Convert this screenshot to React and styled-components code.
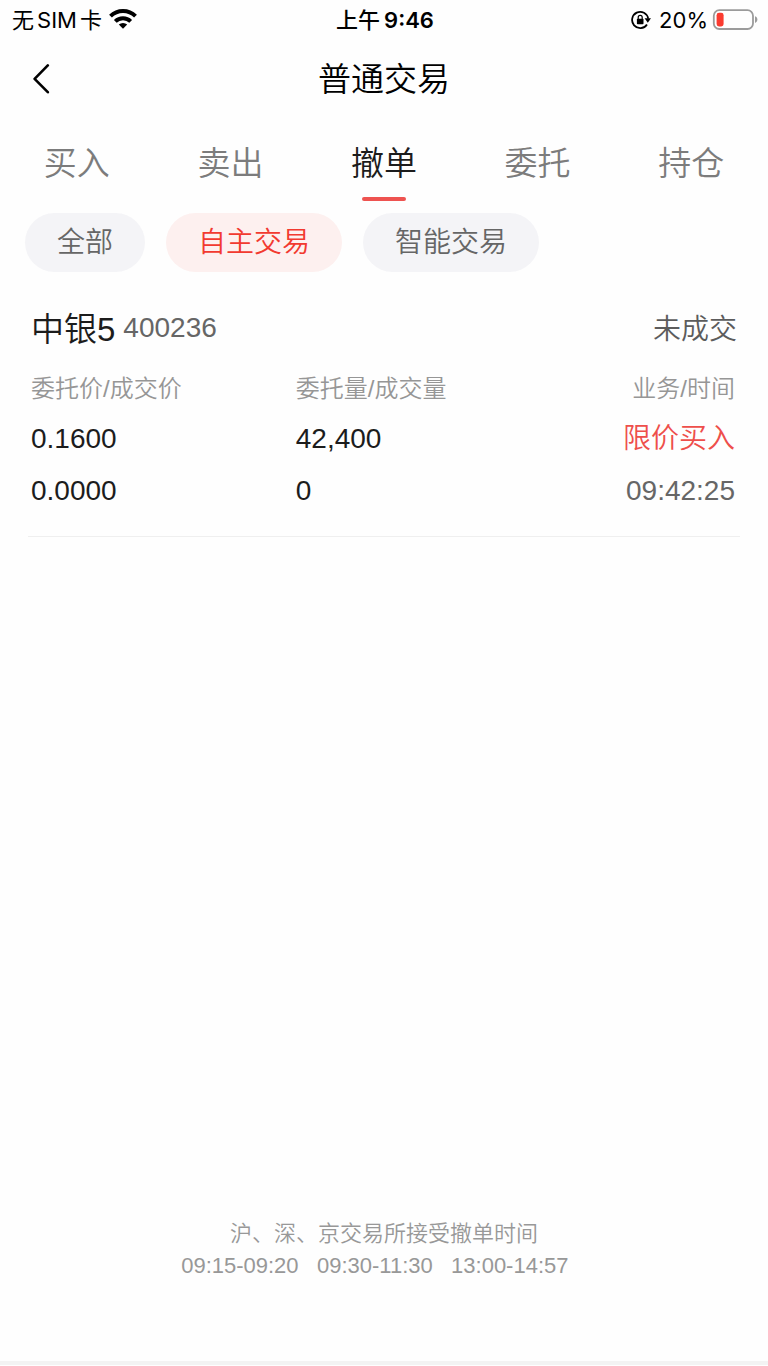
import React, { useState } from "react";
import styled, { createGlobalStyle } from "styled-components";

/* ---------------- GLOBAL ---------------- */
const GlobalStyle = createGlobalStyle`
  * {
    box-sizing: border-box;
  }

  body {
    margin: 0;
    background: #fefefe;
    color: #1c1c1c;
    font-family: "Liberation Sans", "Noto Sans CJK SC", sans-serif;
    font-weight: 350;
  }

  button {
    padding: 0;
    border: none;
    background: none;
    font: inherit;
    color: inherit;
    cursor: pointer;
  }
`;

const Page = styled.div`
  display: flex;
  flex-direction: column;
  min-height: 100vh;
`;

/* ---------------- STATUS BAR ---------------- */
const StatusBar = styled.div`
  display: grid;
  grid-template-columns: 1fr auto 1fr;
  align-items: center;
  height: 40px;
  padding: 0 10px 0 12px;
  font-family: Inter, "Noto Sans CJK SC", sans-serif;
  font-size: 22px;
  font-weight: 400;
  line-height: 24px;
  color: #000;
`;

const StatusGroup = styled.div`
  display: flex;
  align-items: center;
  justify-content: ${(p) => (p.$end ? "flex-end" : "flex-start")};
  gap: ${(p) => (p.$end ? 4 : 7)}px;

  svg {
    display: block;
    flex: none;
  }
`;

const Carrier = styled.span`
  display: flex;
  gap: 3px;
`;

const Clock = styled.span`
  display: flex;
  gap: 4px;
  font-weight: 600;

  span:first-child {
    font-weight: 500;
  }
`;

const Percent = styled.span`
  padding-left: 4px;
`;

/* ---------------- HEADER ---------------- */
const Header = styled.header`
  display: grid;
  grid-template-columns: 80px 1fr 80px;
  align-items: center;
  height: 78px;
  color: #000;
`;

const BackButton = styled.button`
  display: flex;
  align-items: center;
  height: 76px;
  padding-left: 32px;
`;

const Title = styled.h1`
  margin: 0;
  padding-top: 2px;
  font-size: 33px;
  font-weight: 350;
  line-height: 48px;
  text-align: center;
`;

/* ---------------- TABS ---------------- */
const Tabs = styled.nav`
  display: grid;
  grid-template-columns: repeat(5, 1fr);
  padding-top: 22px;
`;

const Tab = styled.button`
  display: flex;
  flex-direction: column;
  align-items: center;
  gap: 9px;
  font-size: 33px;
  line-height: 48px;
  color: ${(p) => (p.$active ? "#1c1c1c" : "#7c7c7c")};

  &::after {
    content: "";
    width: 44px;
    height: 4px;
    border-radius: 2px;
    background: ${(p) => (p.$active ? "#ee5350" : "transparent")};
  }
`;

/* ---------------- FILTERS ---------------- */
const Filters = styled.div`
  display: flex;
  gap: 21px;
  padding: 12px 25px 0;
`;

const Chip = styled.button`
  height: 59px;
  padding: 0 32px;
  border-radius: 30px;
  font-size: 28px;
  line-height: 40px;
  color: ${(p) => (p.$active ? "#f23a30" : "#666")};
  background: ${(p) => (p.$active ? "#fdf0ef" : "#f4f4f7")};
`;

/* ---------------- ORDER ---------------- */
const Order = styled.article`
  margin: 34px 28px 0;
  padding: 0 3px 19px;
  border-bottom: 1px solid #efefef;
`;

const OrderHead = styled.div`
  display: flex;
  align-items: center;
  gap: 8px;
  height: 48px;
`;

const StockName = styled.h2`
  margin: 0;
  font-size: 33px;
  font-weight: 350;
  line-height: 48px;
`;

const StockCode = styled.span`
  height: 48px;
  font-size: 28px;
  line-height: 44px;
  color: #666;
`;

const OrderStatus = styled.span`
  margin-left: auto;
  font-size: 28px;
  line-height: 48px;
  color: #5c5c5c;
`;

const Table = styled.table`
  width: 100%;
  margin-top: 11px;
  table-layout: fixed;
  border-collapse: collapse;
  text-align: left;
`;

const HeadCell = styled.th`
  width: ${(p) => p.$width};
  height: 48px;
  padding: ${(p) => (p.$end ? "0 2px 0 0" : "0")};
  font-size: 24px;
  font-weight: 350;
  line-height: 36px;
  text-align: ${(p) => (p.$end ? "right" : "left")};
  color: #969696;
`;

const Cell = styled.td`
  height: 52px;
  padding: ${(p) => (p.$end ? "0 2px 0 0" : "0")};
  font-size: 28px;
  line-height: 40px;
  text-align: ${(p) => (p.$end ? "right" : "left")};
  color: ${(p) => (p.$side ? "#ee4f4b" : p.$end ? "#666" : "#1c1c1c")};
`;

/* ---------------- FOOTER ---------------- */
const Footer = styled.footer`
  margin-top: auto;
  padding-bottom: 79px;
  font-size: 22px;
  line-height: 32px;
  text-align: center;
  color: #989898;

  p {
    margin: 0;
    white-space: pre;
  }
`;

const BottomLine = styled.div`
  height: 4px;
  margin-bottom: 1px;
  background: #f3f3f3;
`;

/* ---------------- ICONS ---------------- */
const WifiIcon = () => (
  <svg width="28" height="22" viewBox="0 0 28 22" aria-hidden="true">
    <g fill="none" stroke="#000" strokeWidth="4">
      <path d="M1.5 7.2a17.8 17.8 0 0 1 25 0" />
      <path d="M6.3 12.4a11 11 0 0 1 15.4 0" />
    </g>
    <path d="M14 19.8 9.8 15.6a6 6 0 0 1 8.4 0z" />
  </svg>
);

const RotationLockIcon = () => (
  <svg width="20" height="20" viewBox="0 0 20 20" aria-hidden="true">
    <path
      d="M16 14.4A8.1 8.1 0 1 1 17.2 8.6"
      fill="none"
      stroke="#000"
      strokeWidth="1.8"
    />
    <path d="M13.6 8.2H20l-3.2 4.6z" />
    <rect x="5.9" y="8.8" width="6.6" height="5.4" rx="0.8" />
    <path
      d="M7.2 9V7.4a2 2 0 0 1 4 0V9"
      fill="none"
      stroke="#000"
      strokeWidth="1.2"
    />
  </svg>
);

const BatteryIcon = () => (
  <svg width="46" height="22" viewBox="0 0 46 22" aria-hidden="true">
    <rect
      x="1.8"
      y="1.2"
      width="39.2"
      height="18.8"
      rx="5.5"
      fill="none"
      stroke="#9b9b9b"
      strokeWidth="1.8"
    />
    <rect x="4.6" y="3.8" width="7" height="13.6" rx="2.4" fill="#fa3b30" />
    <path d="M43 7.2c3.2 1 3.2 5.8 0 6.8z" fill="#9b9b9b" />
  </svg>
);

const BackIcon = () => (
  <svg width="18" height="30" viewBox="0 0 18 30" aria-hidden="true">
    <path
      d="M15.8 1.4 2.6 14.8l13.2 13.4"
      fill="none"
      stroke="#000"
      strokeWidth="2.6"
      strokeLinecap="round"
      strokeLinejoin="round"
    />
  </svg>
);

const tabs = ["买入", "卖出", "撤单", "委托", "持仓"];
const filters = ["全部", "自主交易", "智能交易"];

export default function App() {
  const [tab, setTab] = useState("撤单");
  const [filter, setFilter] = useState("自主交易");

  return (
    <Page lang="zh-CN">
      <GlobalStyle />

      <StatusBar>
        <StatusGroup>
          <Carrier>
            <span>无</span>
            <span>SIM</span>
            <span>卡</span>
          </Carrier>
          <WifiIcon />
        </StatusGroup>
        <Clock>
          <span>上午</span>
          <span>9:46</span>
        </Clock>
        <StatusGroup $end>
          <RotationLockIcon />
          <Percent>20%</Percent>
          <BatteryIcon />
        </StatusGroup>
      </StatusBar>

      <Header>
        <BackButton type="button" aria-label="返回">
          <BackIcon />
        </BackButton>
        <Title>普通交易</Title>
      </Header>

      <Tabs>
        {tabs.map((name) => (
          <Tab
            key={name}
            type="button"
            $active={name === tab}
            onClick={() => setTab(name)}
          >
            {name}
          </Tab>
        ))}
      </Tabs>

      <Filters>
        {filters.map((name) => (
          <Chip
            key={name}
            type="button"
            $active={name === filter}
            aria-pressed={name === filter}
            onClick={() => setFilter(name)}
          >
            {name}
          </Chip>
        ))}
      </Filters>

      <Order>
        <OrderHead>
          <StockName>中银5</StockName>
          <StockCode>400236</StockCode>
          <OrderStatus>未成交</OrderStatus>
        </OrderHead>
        <Table>
          <thead>
            <tr>
              <HeadCell $width="37.5%">委托价/成交价</HeadCell>
              <HeadCell $width="37.5%">委托量/成交量</HeadCell>
              <HeadCell $end>业务/时间</HeadCell>
            </tr>
          </thead>
          <tbody>
            <tr>
              <Cell>0.1600</Cell>
              <Cell>42,400</Cell>
              <Cell $end $side>
                限价买入
              </Cell>
            </tr>
            <tr>
              <Cell>0.0000</Cell>
              <Cell>0</Cell>
              <Cell $end>09:42:25</Cell>
            </tr>
          </tbody>
        </Table>
      </Order>

      <Footer>
        <p>沪、深、京交易所接受撤单时间</p>
        <p>{"09:15-09:20   09:30-11:30   13:00-14:57   "}</p>
      </Footer>
      <BottomLine />
    </Page>
  );
}
